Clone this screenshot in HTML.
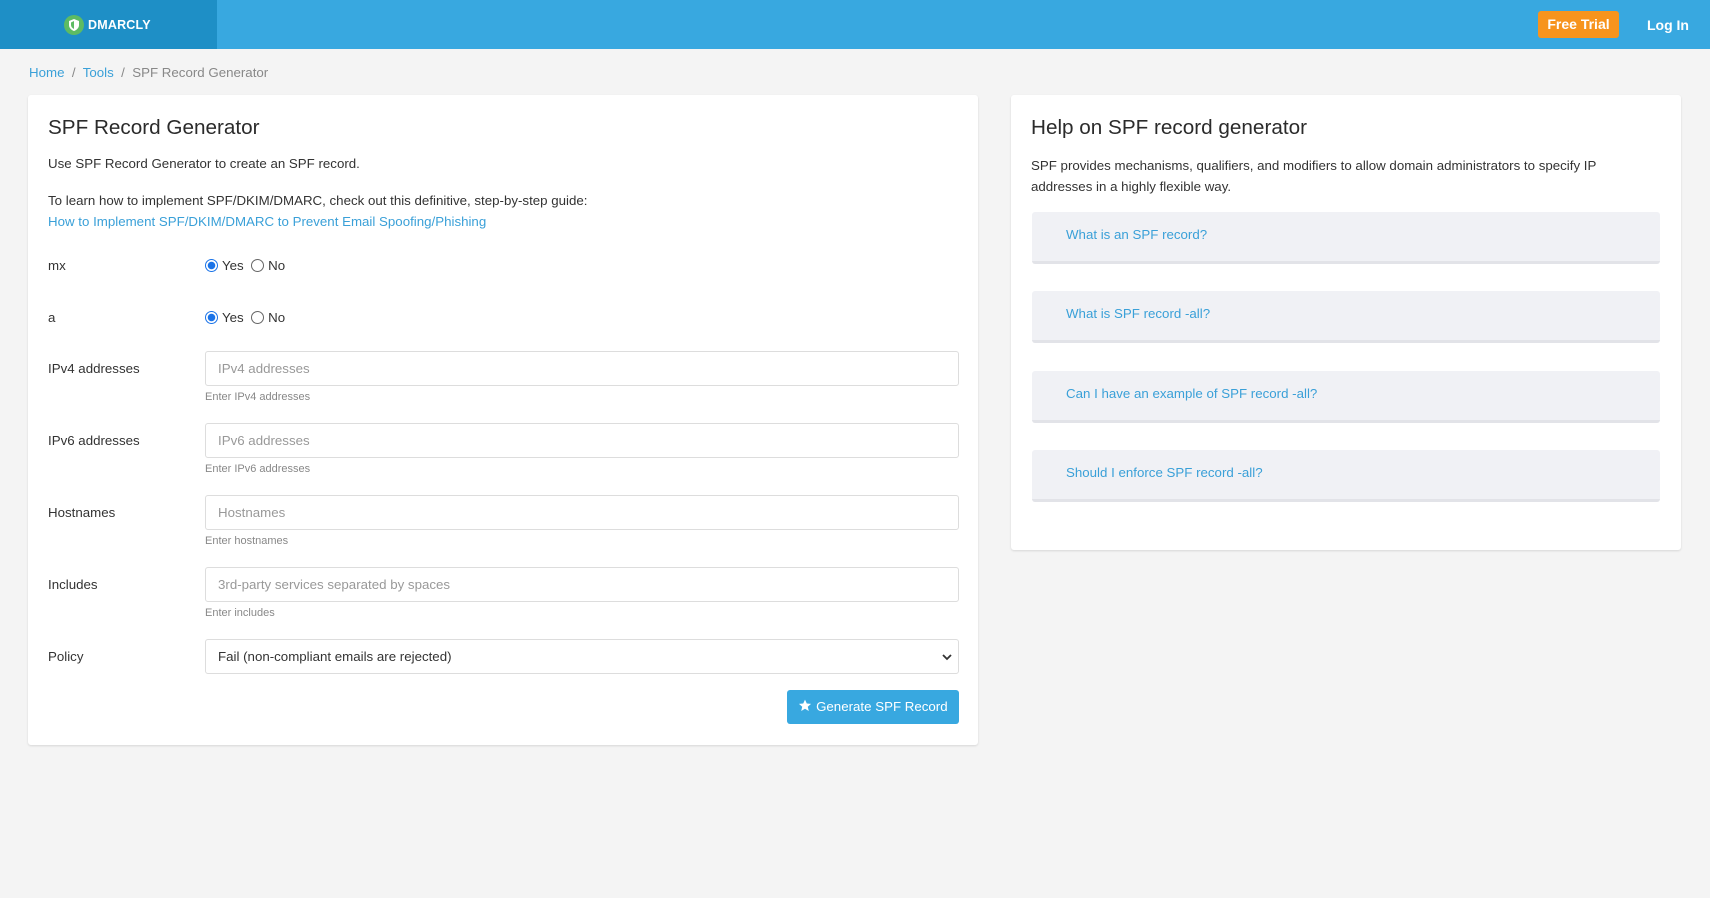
<!DOCTYPE html>
<html><head><meta charset="utf-8"><style>
*{box-sizing:border-box;margin:0;padding:0}
body{width:1710px;height:898px;background:#f4f4f4;font-family:"Liberation Sans",sans-serif;color:#333;font-size:13.3px;position:relative;overflow:hidden}
.a{position:absolute}
.nav{left:0;top:0;width:1710px;height:49px;background:#38a8e0}
.logo{left:0;top:0;width:217px;height:49px;background:#1e8fc6}
.card{background:#fff;border-radius:3px;box-shadow:0 1px 2px rgba(0,0,0,.12)}
h2{font-size:20.7px;font-weight:normal;color:#2b2b2b;position:absolute}
.lbl{left:48px;font-size:13.3px;color:#333}
.inp{left:205px;width:754px;height:35px;border:1px solid #ddd;border-radius:3px;padding:0 12px;line-height:33px;color:#999;font-size:13.3px;background:#fff}
.help{left:205px;font-size:11px;color:#888}
.acc{left:1032px;width:628px;height:52px;background:#f0f1f5;border-radius:3px;border-bottom:3px solid #e2e3e8;color:#3aa0d8;padding-left:34px;line-height:46px;font-size:13.3px}
.rad{display:inline-block;width:13px;height:13px;border:1px solid #666;border-radius:50%;vertical-align:-2px;margin-right:4px}
.rad.on{border:1px solid #1a73e8;background:radial-gradient(circle,#1a73e8 0 3.5px,#fff 4px)}
a{color:#3aa0d8;text-decoration:none}
</style></head><body>
<div class="a nav"></div>
<div class="a logo"></div>
<div class="a" style="left:64px;top:15px;width:20px;height:20px;border-radius:50%;background:#5dbb63"></div>
<svg class="a" style="left:68px;top:18px" width="12" height="14" viewBox="0 0 12 14"><path d="M6 1 L11 3 V7 C11 10 8.5 12 6 13 C3.5 12 1 10 1 7 V3 Z" fill="#fff"/><path d="M6 3 V11 C4 10 3 8.5 3 7 V4.5Z" fill="#5dbb63"/></svg>
<div class="a" style="left:88px;top:18px;color:#fff;font-weight:bold;font-size:12.5px;letter-spacing:.2px">DMARCLY</div>
<div class="a" style="left:1538px;top:11px;width:81px;height:27px;background:#f7941d;border-radius:3px;color:#fff;font-weight:bold;font-size:14px;text-align:center;line-height:27px">Free Trial</div>
<div class="a" style="left:1647px;top:17px;color:#fff;font-weight:bold;font-size:14px">Log In</div>
<div class="a" style="left:29px;top:65px;font-size:13.3px;color:#888"><a>Home</a> &nbsp;/&nbsp; <a>Tools</a> &nbsp;/&nbsp; SPF Record Generator</div>

<div class="a card" style="left:28px;top:95px;width:950px;height:650px"></div>
<h2 style="left:48px;top:116px">SPF Record Generator</h2>
<div class="a" style="left:48px;top:156px">Use SPF Record Generator to create an SPF record.</div>
<div class="a" style="left:48px;top:193px">To learn how to implement SPF/DKIM/DMARC, check out this definitive, step-by-step guide:</div>
<div class="a" style="left:48px;top:214px"><a>How to Implement SPF/DKIM/DMARC to Prevent Email Spoofing/Phishing</a></div>
<div class="a lbl" style="top:258px">mx</div>
<div class="a" style="left:205px;top:258px"><span class="rad on"></span>Yes &nbsp;<span class="rad"></span>No</div>
<div class="a lbl" style="top:310px">a</div>
<div class="a" style="left:205px;top:310px"><span class="rad on"></span>Yes &nbsp;<span class="rad"></span>No</div>
<div class="a lbl" style="top:361px">IPv4 addresses</div>
<div class="a inp" style="top:351px">IPv4 addresses</div>
<div class="a help" style="top:391px">Enter IPv4 addresses</div>
<div class="a lbl" style="top:433px">IPv6 addresses</div>
<div class="a inp" style="top:423px">IPv6 addresses</div>
<div class="a help" style="top:463px">Enter IPv6 addresses</div>
<div class="a lbl" style="top:505px">Hostnames</div>
<div class="a inp" style="top:495px">Hostnames</div>
<div class="a help" style="top:535px">Enter hostnames</div>
<div class="a lbl" style="top:577px">Includes</div>
<div class="a inp" style="top:567px">3rd-party services separated by spaces</div>
<div class="a help" style="top:607px">Enter includes</div>
<div class="a lbl" style="top:649px">Policy</div>
<div class="a inp" style="top:639px;color:#333">Fail (non-compliant emails are rejected)<svg style="position:absolute;right:6px;top:13px" width="10" height="8" viewBox="0 0 10 8"><path d="M1 2 L5 6 L9 2" stroke="#333" stroke-width="1.8" fill="none"/></svg></div>
<div class="a" style="left:787px;top:690px;width:172px;height:34px;background:#38a8e0;border-radius:3px;color:#fff;font-size:13.3px;line-height:34px;text-align:center"><svg width="14" height="13" viewBox="0 0 24 23" style="vertical-align:-1px"><path d="M12 1l3.1 7 7.6.7-5.8 5 1.8 7.5L12 17.3 5.3 21.2l1.8-7.5-5.8-5 7.6-.7z" fill="#fff"/></svg> Generate SPF Record</div>

<div class="a card" style="left:1011px;top:95px;width:670px;height:455px"></div>
<h2 style="left:1031px;top:116px">Help on SPF record generator</h2>
<div class="a" style="left:1031px;top:155px;width:620px;line-height:21px">SPF provides mechanisms, qualifiers, and modifiers to allow domain administrators to specify IP addresses in a highly flexible way.</div>
<div class="a acc" style="top:212px">What is an SPF record?</div>
<div class="a acc" style="top:291px">What is SPF record -all?</div>
<div class="a acc" style="top:371px">Can I have an example of SPF record -all?</div>
<div class="a acc" style="top:450px">Should I enforce SPF record -all?</div>
</body></html>
